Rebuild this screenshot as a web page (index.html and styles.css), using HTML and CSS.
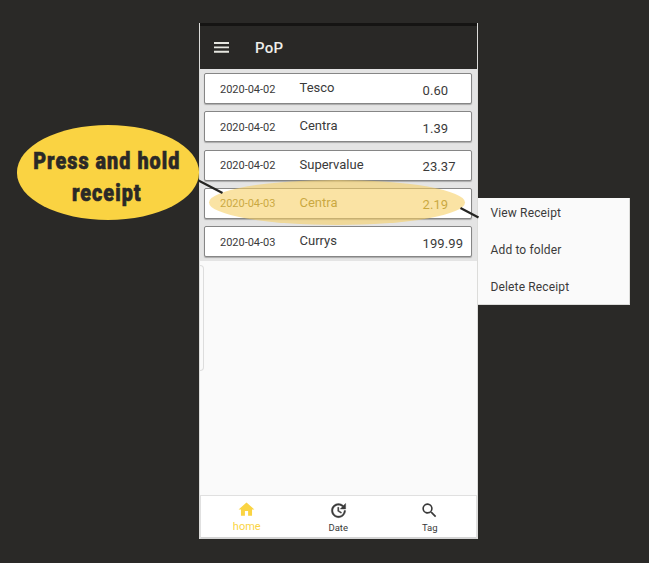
FILE: index.html
```html
<!DOCTYPE html>
<html lang="en">
<head>
<meta charset="utf-8">
<title>PoP</title>
<link rel="stylesheet" href="styles.css">
</head>
<body>
<main class="stage">
  <section class="phone">
    <header class="appbar">
      <svg class="menu-icon" viewBox="0 0 15 11"><path d="M0 1h15M0 5.400h15M0 9.800h15" stroke="#e6e6e0" stroke-width="1.900"/></svg>
      <h1>PoP</h1>
    </header>
    <div class="receipts">
      <article class="receipt"><time>2020-04-02</time><span class="shop">Tesco</span><span class="price">0.60</span></article>
      <article class="receipt"><time>2020-04-02</time><span class="shop">Centra</span><span class="price">1.39</span></article>
      <article class="receipt"><time>2020-04-02</time><span class="shop">Supervalue</span><span class="price">23.37</span></article>
      <article class="receipt selected"><time>2020-04-03</time><span class="shop">Centra</span><span class="price">2.19</span></article>
      <article class="receipt"><time>2020-04-03</time><span class="shop">Currys</span><span class="price">199.99</span></article>
    </div>
    <div class="blank"><div class="drawer-edge"></div></div>
    <nav class="tabs">
      <a class="tab active"><svg viewBox="0 0 24 24"><path fill="currentColor" d="M10 20v-6h4v6h5v-8h3L12 3 2 12h3v8z"/></svg><span>home</span></a>
      <a class="tab"><svg viewBox="0 0 24 24"><path fill="currentColor" stroke="currentColor" stroke-width=".5" d="M21 10.120h-6.780l2.740-2.820c-2.730-2.700-7.150-2.800-9.880-.1-2.730 2.710-2.730 7.080 0 9.790 2.730 2.710 7.150 2.710 9.880 0C18.320 15.650 19 14.080 19 12.100h2c0 1.980-.88 4.550-2.640 6.290-3.510 3.480-9.210 3.480-12.720 0-3.500-3.470-3.530-9.110-.02-12.580 3.510-3.470 9.140-3.470 12.650 0L21 3v7.120zM12.500 8v4.250l3.500 2.080-.72 1.210L11 13V8h1.500z"/></svg><span>Date</span></a>
      <a class="tab"><svg viewBox="0 0 24 24"><path fill="currentColor" d="M15.500 14h-.79l-.28-.27A6.500 6.500 0 1 0 13.730 14.430l.27.28v.79l5 4.990L20.490 19zM9.500 14a4.500 4.500 0 1 1 0-9 4.500 4.500 0 0 1 0 9z"/></svg><span>Tag</span></a>
    </nav>
  </section>
  <div class="highlight"></div>
  <div class="callout"><span>Press and hold</span><span>receipt</span></div>
  <div class="context-menu"><span>View Receipt</span><span>Add to folder</span><span>Delete Receipt</span></div>
  <svg class="connectors" viewBox="0 0 649 563"><path d="M198.500 180.500L222.500 193M460.500 208L478.500 217.500" stroke="#242422" stroke-width="2.200"/></svg>
</main>
</body>
</html>
```
FILE: styles.css
```css
* { box-sizing: border-box; }
body { margin: 0; background: #2a2927; font-family: Roboto, sans-serif; color: #3a3a3a; }
.stage { position: relative; width: 649px; height: 563px; overflow: hidden; padding: 23px 0 0 199px; }
.phone { width: 278.500px; height: 516px; display: flex; flex-direction: column; background: #fafafa; border: solid #dcdcda; border-width: 0 1.500px 0 1px; }
.appbar { height: 45.500px; flex: none; display: flex; align-items: center; background: #292826; border-top: 3px solid #151413; padding: 0 0 0 14px; }
.menu-icon { width: 15px; height: 11px; margin-right: 26px; }
h1 { margin: 1px 0 0; font-size: 15px; font-weight: 500; line-height: 20px; color: #eeeeea; letter-spacing: .2px; }
.receipts { height: 192.500px; flex: none; background: #e4e4e4; padding: 4.500px 5px 0 4px; display: flex; flex-direction: column; gap: 7.300px; }
.receipt { height: 31px; flex: none; display: grid; grid-template-columns: 79.500px 123px 1fr; padding-left: 15px; background: #fff; border: 1px solid #868686; border-radius: 2px; box-shadow: 0 1px 1px #aaa; white-space: nowrap; line-height: 18px; }
.receipt time { font-size: 11px; padding-top: 6.500px; letter-spacing: -.02px; }
.shop { font-size: 13px; padding-top: 5px; }
.price { font-size: 13px; padding-top: 7.500px; letter-spacing: .1px; }
.selected { color: #8c7410; }
.blank { flex: 1; padding-top: 4px; }
.drawer-edge { width: 4px; height: 106px; border: 1px solid #ddd; border-left: 0; border-radius: 0 4px 4px 0; }
.tabs { height: 44px; flex: none; display: grid; grid-template-columns: repeat(3, 91.500px); background: #fff; border: 1px solid #e0e0e0; border-bottom: 2px solid #d4d4d4; }
.tab { display: flex; flex-direction: column; align-items: center; padding-top: 5px; font-size: 9.500px; line-height: 13px; }
.tab svg { width: 19px; height: 19px; margin-bottom: 1px; }
.tab.active { color: #fad443; font-size: 11px; }
.tab.active svg { margin-top: -1px; margin-bottom: 1px; }
.highlight { position: absolute; left: 209px; top: 180px; width: 256px; height: 45px; border-radius: 50%; background: rgba(247, 207, 99, .58); }
.callout { position: absolute; left: 16.500px; top: 125px; width: 182.500px; height: 94.500px; border-radius: 50%; background: #fad342; display: flex; flex-direction: column; align-items: center; padding-top: 21px; font-size: 23px; font-weight: 900; line-height: 32px; color: #2a2927; white-space: nowrap; }
.callout span { transform: translateX(-.8px) scaleX(.86); letter-spacing: 1.200px; -webkit-text-stroke: .6px #2a2927; }
.context-menu { position: absolute; left: 478px; top: 198px; width: 152px; height: 106.500px; background: #fafafa; border: solid #dcdcda; border-width: 0 1px 1px 0; padding: 5px 0 0 12.500px; display: flex; flex-direction: column; gap: 16.800px; font-size: 12px; letter-spacing: .14px; line-height: 20px; }
.connectors { position: absolute; left: 0; top: 0; width: 649px; height: 563px; }
```
